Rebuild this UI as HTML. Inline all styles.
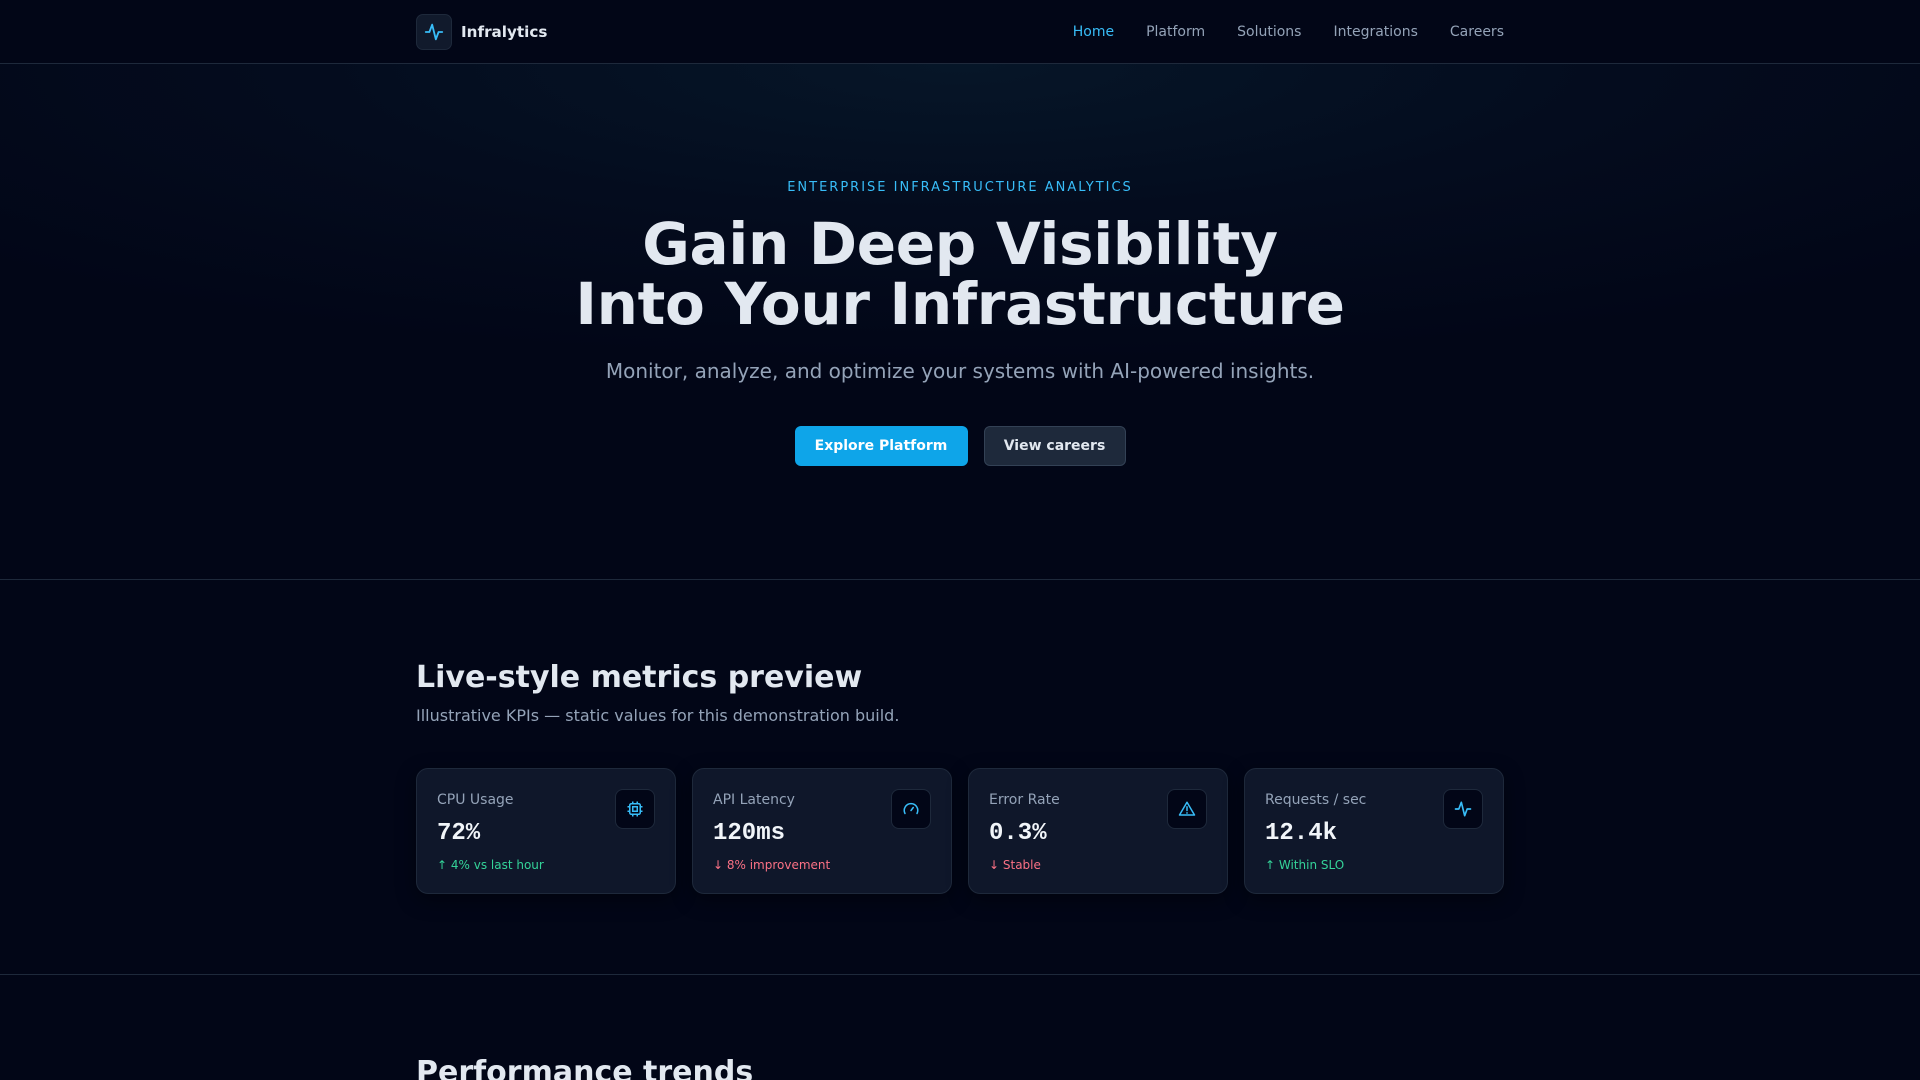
<!DOCTYPE html>
<html><head><meta charset="utf-8"><style>
*{box-sizing:border-box;margin:0;padding:0}
html,body{width:1920px;height:1080px;overflow:hidden;background:#020617;font-family:"DejaVu Sans","Liberation Sans",sans-serif;color:#e2e8f0}
.wrap{width:1088px;margin:0 auto;position:relative}
nav{height:64px;border-bottom:1px solid #1e293b;background:#020617}
nav .wrap{display:flex;align-items:center;height:63px;justify-content:space-between}
.logo{display:flex;align-items:center;gap:9px;font-weight:bold;font-size:15.2px;color:#e2e8f0}
.lbox{width:36px;height:36px;border-radius:7px;background:#111a2c;border:1px solid #1e293b;display:flex;align-items:center;justify-content:center}
.links{display:flex;gap:32px;font-size:14px;color:#94a3b8}
.links .a{color:#38bdf8}
.hero{height:516px;border-bottom:1px solid #1e293b;background:radial-gradient(ellipse 1300px 300px at 50% 0,#061628 0%,#040c1e 50%,#020617 100%);text-align:center;padding-top:114px}
.eb{font-size:13px;letter-spacing:2px;color:#38bdf8;line-height:20px}
h1{font-size:58px;line-height:60px;font-weight:bold;color:#e2e8f0;margin-top:16px;letter-spacing:-0.3px}
.sub{font-size:20px;color:#94a3b8;margin-top:22px;line-height:30px}
.btns{margin-top:40px;display:flex;justify-content:center;gap:16px}
.btn{height:40px;border-radius:6px;font-weight:bold;font-size:14px;display:flex;align-items:center;white-space:nowrap;justify-content:center}
.b1{background:#0ea5e9;color:#fff;width:173px}
.b2{background:#1e293b;border:1px solid #334155;color:#e2e8f0;width:142px}
.sec{height:395px;border-bottom:1px solid #1e293b;padding-top:76px}
h2{font-size:30px;font-weight:bold;line-height:44px;color:#e2e8f0}
.ss{font-size:16px;color:#94a3b8;margin-top:6px}
.cards{display:flex;gap:16px;margin-top:43px}
.card{width:260px;height:126px;background:#0f172a;border:1px solid #1e293b;border-radius:12px;padding:20px;position:relative;box-shadow:0 6px 20px rgba(0,0,0,.4)}
.lab{font-size:14px;color:#94a3b8;line-height:20px;margin-top:1px}
.val{font-family:"Liberation Mono",monospace;font-weight:bold;font-size:24px;margin-top:10px;line-height:28px;color:#f1f5f9}
.d{font-size:12px;margin-top:10px}
.g{color:#34d399}.r{color:#fb7185}
.ic{position:absolute;right:20px;top:20px;width:40px;height:40px;border-radius:8px;background:#020617;border:1px solid #1e293b;display:flex;align-items:center;justify-content:center}
.s3{padding-top:76px}
</style></head><body>
<nav><div class="wrap"><div class="logo"><div class="lbox"><svg width="22" height="22" viewBox="0 0 24 24" fill="none" stroke="#38bdf8" stroke-width="2" stroke-linecap="round" stroke-linejoin="round"><path d="M3 12h4l3-8 4 16 3-8h4"/></svg></div>Infralytics</div>
<div class="links"><span class="a">Home</span><span>Platform</span><span>Solutions</span><span>Integrations</span><span>Careers</span></div></div></nav>
<div class="hero"><div class="eb">ENTERPRISE INFRASTRUCTURE ANALYTICS</div>
<h1>Gain Deep Visibility<br>Into Your Infrastructure</h1>
<div class="sub">Monitor, analyze, and optimize your systems with AI-powered insights.</div>
<div class="btns"><div class="btn b1">Explore Platform</div><div class="btn b2">View careers</div></div></div>
<div class="sec"><div class="wrap"><h2>Live-style metrics preview</h2><div class="ss">Illustrative KPIs — static values for this demonstration build.</div>
<div class="cards">
<div class="card"><div class="lab">CPU Usage</div><div class="val">72%</div><div class="d g">↑ 4% vs last hour</div><div class="ic"><svg width="18" height="18" viewBox="0 0 24 24" fill="none" stroke="#38bdf8" stroke-width="2"><rect x="5" y="5" width="14" height="14" rx="2"/><rect x="9" y="9" width="6" height="6"/><path d="M9 2v3M15 2v3M9 19v3M15 19v3M2 9h3M2 15h3M19 9h3M19 15h3"/></svg></div></div>
<div class="card"><div class="lab">API Latency</div><div class="val">120ms</div><div class="d r">↓ 8% improvement</div><div class="ic"><svg width="18" height="18" viewBox="0 0 24 24" fill="none" stroke="#38bdf8" stroke-width="2" stroke-linecap="round"><path d="M4 18a9 9 0 1 1 16 0"/><path d="M12 14l3-4"/></svg></div></div>
<div class="card"><div class="lab">Error Rate</div><div class="val">0.3%</div><div class="d r">↓ Stable</div><div class="ic"><svg width="18" height="18" viewBox="0 0 24 24" fill="none" stroke="#38bdf8" stroke-width="2" stroke-linecap="round" stroke-linejoin="round"><path d="M12 3L2 20h20z"/><path d="M12 9v5M12 17v.5"/></svg></div></div>
<div class="card"><div class="lab">Requests / sec</div><div class="val">12.4k</div><div class="d g">↑ Within SLO</div><div class="ic"><svg width="20" height="20" viewBox="0 0 24 24" fill="none" stroke="#38bdf8" stroke-width="2" stroke-linecap="round" stroke-linejoin="round"><path d="M3 12h4l3-8 4 16 3-8h4"/></svg></div></div>
</div></div></div>
<div class="s3"><div class="wrap"><h2>Performance trends</h2></div></div>
</body></html>
